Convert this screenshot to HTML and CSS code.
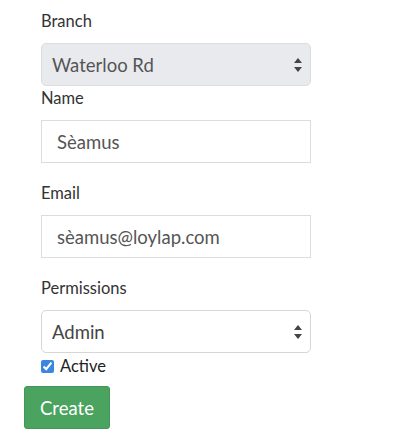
FILE: index.html
```html
<!DOCTYPE html>
<html lang="en">
<head>
  <meta charset="UTF-8">
  <meta name="viewport" content="width=device-width, initial-scale=1.0">
  <title>New Staff - Loylap</title>
  <link rel="stylesheet" href="styles.css">
</head>
<body>
  <form class="staff-form">
    <div class="fields">
      <div class="form-group tight">
        <label for="branch">Branch</label>
        <div class="select-wrap disabled">
          <select id="branch" disabled>
            <option>Waterloo Rd</option>
          </select>
          <span class="arrows"></span>
        </div>
      </div>

      <div class="form-group">
        <label for="name">Name</label>
        <input type="text" id="name" value="Sèamus">
      </div>

      <div class="form-group">
        <label for="email">Email</label>
        <input type="text" id="email" value="sèamus@loylap.com">
      </div>

      <div class="form-group last">
        <label for="permissions">Permissions</label>
        <div class="select-wrap">
          <select id="permissions">
            <option>Admin</option>
            <option>Staff</option>
          </select>
          <span class="arrows"></span>
        </div>
      </div>

      <label class="checkbox">
        <input type="checkbox" checked>
        <span>Active</span>
      </label>
    </div>

    <button type="submit" class="btn-create">Create</button>
  </form>
</body>
</html>
```

FILE: styles.css
```css
* {
  margin: 0;
  padding: 0;
  box-sizing: border-box;
  font-family: Lato, "Open Sans", Arial, sans-serif;
}

body {
  background-color: #fff;
  padding: 0 24px;
}

.fields {
  padding-left: 17px;
  width: 287px;
}

.form-group {
  margin-bottom: 19px;
}

.form-group:first-child {
  padding-top: 10px;
}

.form-group.tight {
  margin-bottom: 1px;
}

.form-group.last {
  margin-bottom: 3px;
}

.form-group label {
  display: block;
  font-size: 16.5px;
  line-height: 22px;
  color: #333;
  margin-bottom: 11px;
}

input[type="text"] {
  display: block;
  width: 100%;
  height: 43px;
  padding: 0 15px;
  border: 1px solid #dcdcdc;
  border-radius: 0;
  font-size: 18.5px;
  color: #555;
  background-color: #fff;
  outline: none;
}

/* Selects with the small up/down arrows */
.select-wrap {
  position: relative;
}

.select-wrap select {
  display: block;
  width: 100%;
  height: 43px;
  padding: 0 30px 0 10px;
  border: 1px solid #d6d6d6;
  border-radius: 5px;
  font-size: 18.5px;
  color: #444;
  background-color: #fff;
  appearance: none;
  -webkit-appearance: none;
  opacity: 1;
}

.select-wrap.disabled select {
  background-color: #e9eaee;
  border-color: #dcdde1;
  color: #555;
}

.arrows {
  position: absolute;
  right: 9px;
  top: 50%;
  transform: translateY(-50%);
  width: 8px;
  height: 14px;
  pointer-events: none;
}

.arrows::before,
.arrows::after {
  content: "";
  position: absolute;
  left: 0;
  border-left: 4px solid transparent;
  border-right: 4px solid transparent;
}

.arrows::before {
  top: 0;
  border-bottom: 5px solid #444;
}

.arrows::after {
  bottom: 0;
  border-top: 5px solid #444;
}

.checkbox {
  display: flex;
  align-items: center;
  gap: 6px;
  font-size: 16.5px;
  line-height: 20px;
  color: #222;
  margin-bottom: 10px;
}

.checkbox input {
  width: 13px;
  height: 13px;
  accent-color: #3b86e0;
}

.btn-create {
  background-color: #4aa35e;
  color: #fff;
  border: 1px solid #43955a;
  border-radius: 3px;
  font-size: 18.5px;
  height: 43px;
  width: 86px;
  cursor: pointer;
}
```
